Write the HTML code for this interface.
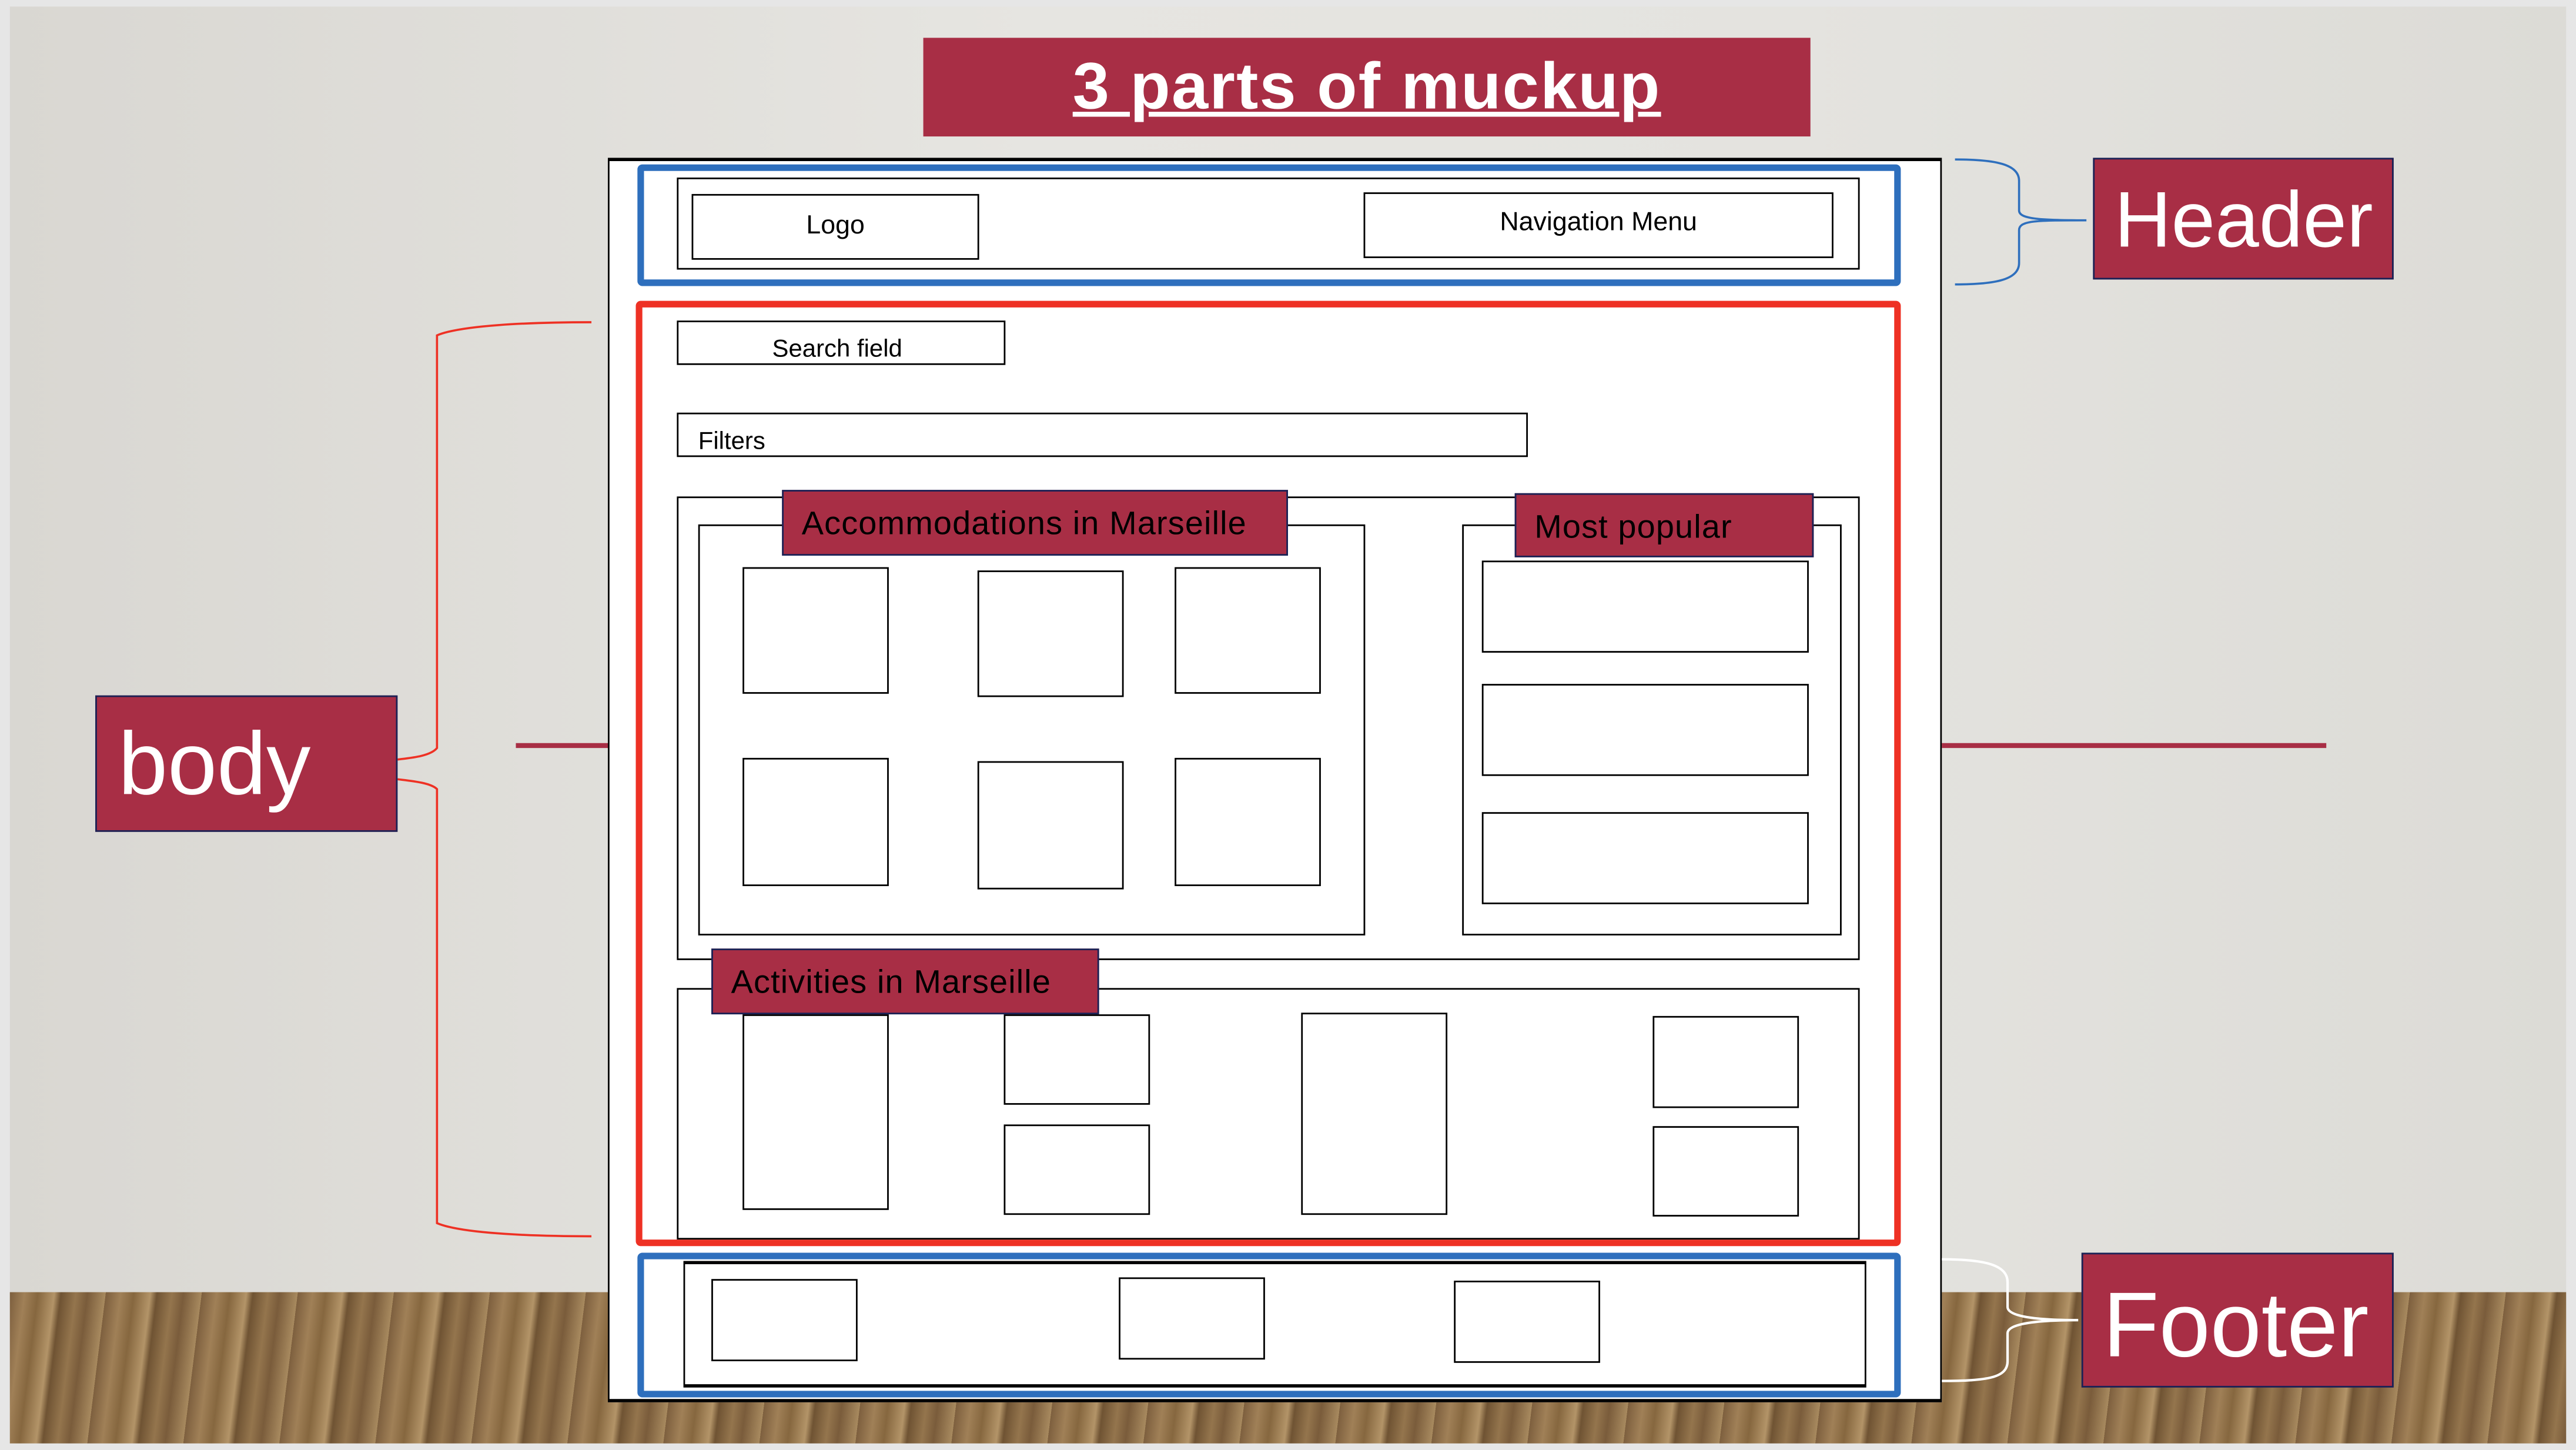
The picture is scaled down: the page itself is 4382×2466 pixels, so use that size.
<!DOCTYPE html>
<html><head><meta charset="utf-8"><style>
html,body{margin:0;padding:0;width:4382px;height:2466px;overflow:hidden;background:#e6e6e6}
#s{position:absolute;left:0;top:0;width:1568px;height:882px;transform:scale(2.79464,2.7959);transform-origin:0 0;font-family:"Liberation Sans",sans-serif}
.a{position:absolute;box-sizing:border-box}
.b{border:1px solid #000;background:#fff}
.lab{background:#a82e45;border:1px solid #1a2256;color:#000;font-size:20px;line-height:40px;padding-left:11px;white-space:nowrap;letter-spacing:0.4px}
.big{background:#a82e45;border:1px solid #1a2256;color:#fff}
</style></head><body><div id="s">
<div class="a" style="left:6px;top:4px;width:1556px;height:782px;background:linear-gradient(90deg,#d9d7d2 0%,#e6e5e1 40%,#e4e3df 70%,#dcdbd6 100%)"></div>
<div class="a" style="left:6px;top:786px;width:1556px;height:92px;background:repeating-linear-gradient(97deg,#7d5f3e 0px,#a08057 9px,#86673f 17px,#b39468 27px,#6f5333 31px,#94754d 40px,#7a5c3b 47px,#a88a5f 58px)"></div>

<div class="a big" style="left:562px;top:23px;width:540px;height:60px;border:none;text-align:center;font-size:40px;font-weight:bold;line-height:60px;"><span style="text-decoration:underline;text-decoration-thickness:3px;letter-spacing:0.8px">3 parts of muckup</span></div>

<div class="a b" style="left:370px;top:96px;width:812px;height:757px;border-top-width:2px;border-bottom-width:2px"></div>

<div class="a" style="left:388px;top:100px;width:769px;height:74px;border:4px solid #2e6fbd;border-radius:3px"></div>
<div class="a b" style="left:412px;top:108px;width:720px;height:56px"></div>
<div class="a b" style="left:421px;top:118px;width:175px;height:40px;text-align:center;font-size:16px;line-height:38px">Logo</div>
<div class="a b" style="left:830px;top:117px;width:286px;height:40px;text-align:center;font-size:16px;line-height:36px">Navigation Menu</div>

<div class="a" style="left:387px;top:183px;width:770px;height:575px;border:4px solid #ee3124;border-radius:3px"></div>
<div class="a b" style="left:412px;top:195px;width:200px;height:27px;font-size:15px;line-height:34px;padding-left:57px">Search field</div>
<div class="a b" style="left:412px;top:251px;width:518px;height:27px;font-size:15px;line-height:34px;padding-left:12px">Filters</div>

<div class="a b" style="left:412px;top:302px;width:720px;height:282px"></div>
<div class="a b" style="left:425px;top:319px;width:406px;height:250px"></div>
<div class="a b" style="left:452px;top:345px;width:89px;height:77px"></div>
<div class="a b" style="left:595px;top:347px;width:89px;height:77px"></div>
<div class="a b" style="left:715px;top:345px;width:89px;height:77px"></div>
<div class="a b" style="left:452px;top:461px;width:89px;height:78px"></div>
<div class="a b" style="left:595px;top:463px;width:89px;height:78px"></div>
<div class="a b" style="left:715px;top:461px;width:89px;height:78px"></div>
<div class="a lab" style="left:476px;top:298px;width:308px;height:40px">Accommodations in Marseille</div>

<div class="a b" style="left:890px;top:319px;width:231px;height:250px"></div>
<div class="a b" style="left:902px;top:341px;width:199px;height:56px"></div>
<div class="a b" style="left:902px;top:416px;width:199px;height:56px"></div>
<div class="a b" style="left:902px;top:494px;width:199px;height:56px"></div>
<div class="a lab" style="left:922px;top:300px;width:182px;height:39px">Most popular</div>

<div class="a b" style="left:412px;top:601px;width:720px;height:153px"></div>
<div class="a b" style="left:452px;top:617px;width:89px;height:119px"></div>
<div class="a b" style="left:611px;top:617px;width:89px;height:55px"></div>
<div class="a b" style="left:611px;top:684px;width:89px;height:55px"></div>
<div class="a b" style="left:792px;top:616px;width:89px;height:123px"></div>
<div class="a b" style="left:1006px;top:618px;width:89px;height:56px"></div>
<div class="a b" style="left:1006px;top:685px;width:89px;height:55px"></div>
<div class="a lab" style="left:433px;top:577px;width:236px;height:40px">Activities in Marseille</div>

<div class="a" style="left:388px;top:762px;width:769px;height:88px;border:4px solid #2e6fbd;border-radius:3px"></div>
<div class="a b" style="left:416px;top:767px;width:720px;height:77px;border-top-width:2px;border-bottom-width:2px"></div>
<div class="a b" style="left:433px;top:778px;width:89px;height:50px"></div>
<div class="a b" style="left:681px;top:777px;width:89px;height:50px"></div>
<div class="a b" style="left:885px;top:779px;width:89px;height:50px"></div>

<div class="a" style="left:314px;top:452px;width:56px;height:3px;background:#a82e45"></div>
<div class="a" style="left:1182px;top:452px;width:234px;height:3px;background:#a82e45"></div>

<svg class="a" style="left:0;top:0" width="1568" height="882">
<path d="M360 196 C320 196 280 198 266 204 L266 455 C262 460 250 461 242 462" fill="none" stroke="#ee3124" stroke-width="1.3"/>
<path d="M360 752 C320 752 280 750 266 744 L266 480 C262 476 250 475 242 474" fill="none" stroke="#ee3124" stroke-width="1.3"/>
<path d="M1190 97 C1215 97 1229 100 1229 110 L1229 128 C1229 133 1240 134 1270 134 M1229 140 C1229 134 1240 134 1270 134 M1229 140 L1229 160 C1229 170 1215 173 1190 173" fill="none" stroke="#2e6fbd" stroke-width="1.3"/>
<path d="M1182 766 C1210 766 1222 770 1222 780 L1222 795 C1222 800 1235 803 1265 803 M1222 811 C1222 806 1235 803 1265 803 M1222 811 L1222 828 C1222 838 1210 840 1182 840" fill="none" stroke="#fff" stroke-width="1.5"/>
</svg>

<div class="a big" style="left:1274px;top:96px;width:183px;height:74px;font-size:48px;line-height:76px;padding-left:12px">Header</div>
<div class="a big" style="left:58px;top:423px;width:184px;height:83px;font-size:54px;line-height:82px;padding-left:13px">body</div>
<div class="a big" style="left:1267px;top:762px;width:190px;height:82px;font-size:56px;line-height:86px;padding-left:12px">Footer</div>
</div></body></html>
